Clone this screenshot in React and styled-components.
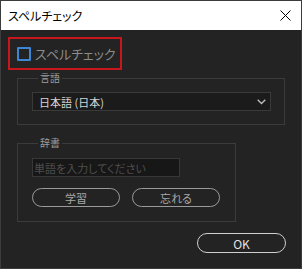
import React from 'react';
import styled, { createGlobalStyle } from 'styled-components';

const GlobalStyle = createGlobalStyle`
  html, body {
    margin: 0;
    padding: 0;
    background: #232323;
  }
  * {
    box-sizing: border-box;
  }
`;

const jp = `"Noto Sans CJK JP", "Noto Sans", sans-serif`;

const Window = styled.div`
  width: 302px;
  height: 269px;
  display: flex;
  flex-direction: column;
  background: #232323;
  border: 1px solid #3c3c3c;
  font-family: ${jp};
  font-feature-settings: "palt";
  overflow: hidden;
`;

const TitleBar = styled.div`
  height: 29px;
  flex-shrink: 0;
  display: flex;
  align-items: center;
  justify-content: space-between;
  background: #ffffff;
  color: #000;
  font-size: 12px;
  padding: 0 10px 0 7px;
`;

const Body = styled.div`
  flex: 1;
  display: flex;
  flex-direction: column;
  padding: 7px 0 0 7px;
`;

const CheckRow = styled.label`
  width: 114px;
  height: 33px;
  display: flex;
  align-items: center;
  gap: 4px;
  padding-left: 7px;
  border: 2px solid #c8171c;
  color: #8c8c8c;
  font-size: 13px;
`;

const Box = styled.span`
  width: 14px;
  height: 14px;
  border: 2px solid #3c86d4;
  border-radius: 1px;
`;

const Group = styled.fieldset`
  width: ${(p) => p.$width}px;
  margin: ${(p) => p.$top}px 0 0 9px;
  padding: ${(p) => p.$pad};
  border: 1px solid #3b3b3b;
  display: flex;
  flex-direction: column;
  min-width: 0;
`;

const Legend = styled.legend`
  margin-left: 6px;
  padding: 0 2px;
  color: #9c9c9c;
  font-size: 10px;
  line-height: 14px;
`;

const Select = styled.div`
  height: 19px;
  display: flex;
  align-items: center;
  justify-content: space-between;
  padding: 0 4px 0 6px;
  background: #1b1b1b;
  border: 1px solid #3a3a3a;
  color: #d6d6d6;
  font-size: 11px;
`;

const Input = styled.input`
  width: 148px;
  height: 19px;
  padding: 0 0 0 1px;
  background: #171717;
  border: 1px solid #383838;
  color: #d6d6d6;
  font-family: ${jp};
  font-feature-settings: "palt";
  font-size: 11px;
  outline: none;
  &::placeholder {
    color: #4e4e4e;
  }
`;

const ButtonRow = styled.div`
  display: flex;
  gap: 12px;
  margin-top: 11px;
`;

const Pill = styled.button`
  width: ${(p) => p.$w}px;
  height: ${(p) => p.$h}px;
  border-radius: 10px;
  background: transparent;
  border: 1.5px solid ${(p) => (p.$primary ? '#cfcfcf' : '#9a9a9a')};
  color: ${(p) => (p.$primary ? '#e2e2e2' : '#a8a8a8')};
  font-family: ${jp};
  font-feature-settings: "palt";
  font-size: ${(p) => (p.$primary ? 12 : 11)}px;
  padding: 0;
  display: flex;
  align-items: center;
  justify-content: center;
`;

const Footer = styled.div`
  display: flex;
  justify-content: flex-end;
  padding-right: 15px;
  margin-top: 11px;
`;

export default function App() {
  return (
    <>
      <GlobalStyle />
      <Window>
        <TitleBar>
          <span>スペルチェック</span>
          <svg width="11" height="11" viewBox="0 0 11 11">
            <path d="M0.5 0.5 L10.5 10.5 M10.5 0.5 L0.5 10.5" stroke="#000" strokeWidth="1" />
          </svg>
        </TitleBar>
        <Body>
          <CheckRow>
            <Box />
            スペルチェック
          </CheckRow>
          <Group $width={268} $top={1} $pad="7px 13px 13px 14px">
            <Legend>言語</Legend>
            <Select>
              <span>日本語 (日本)</span>
              <svg width="9" height="6" viewBox="0 0 9 6">
                <path d="M0.7 0.7 L4.5 4.5 L8.3 0.7" stroke="#bdbdbd" strokeWidth="1.3" fill="none" />
              </svg>
            </Select>
          </Group>
          <Group $width={219} $top={11} $pad="8px 13px 14px 14px">
            <Legend>辞書</Legend>
            <Input placeholder="単語を入力してください" />
            <ButtonRow>
              <Pill $w={88} $h={19}>学習</Pill>
              <Pill $w={88} $h={19}>忘れる</Pill>
            </ButtonRow>
          </Group>
          <Footer>
            <Pill $primary $w={89} $h={20}>OK</Pill>
          </Footer>
        </Body>
      </Window>
    </>
  );
}
